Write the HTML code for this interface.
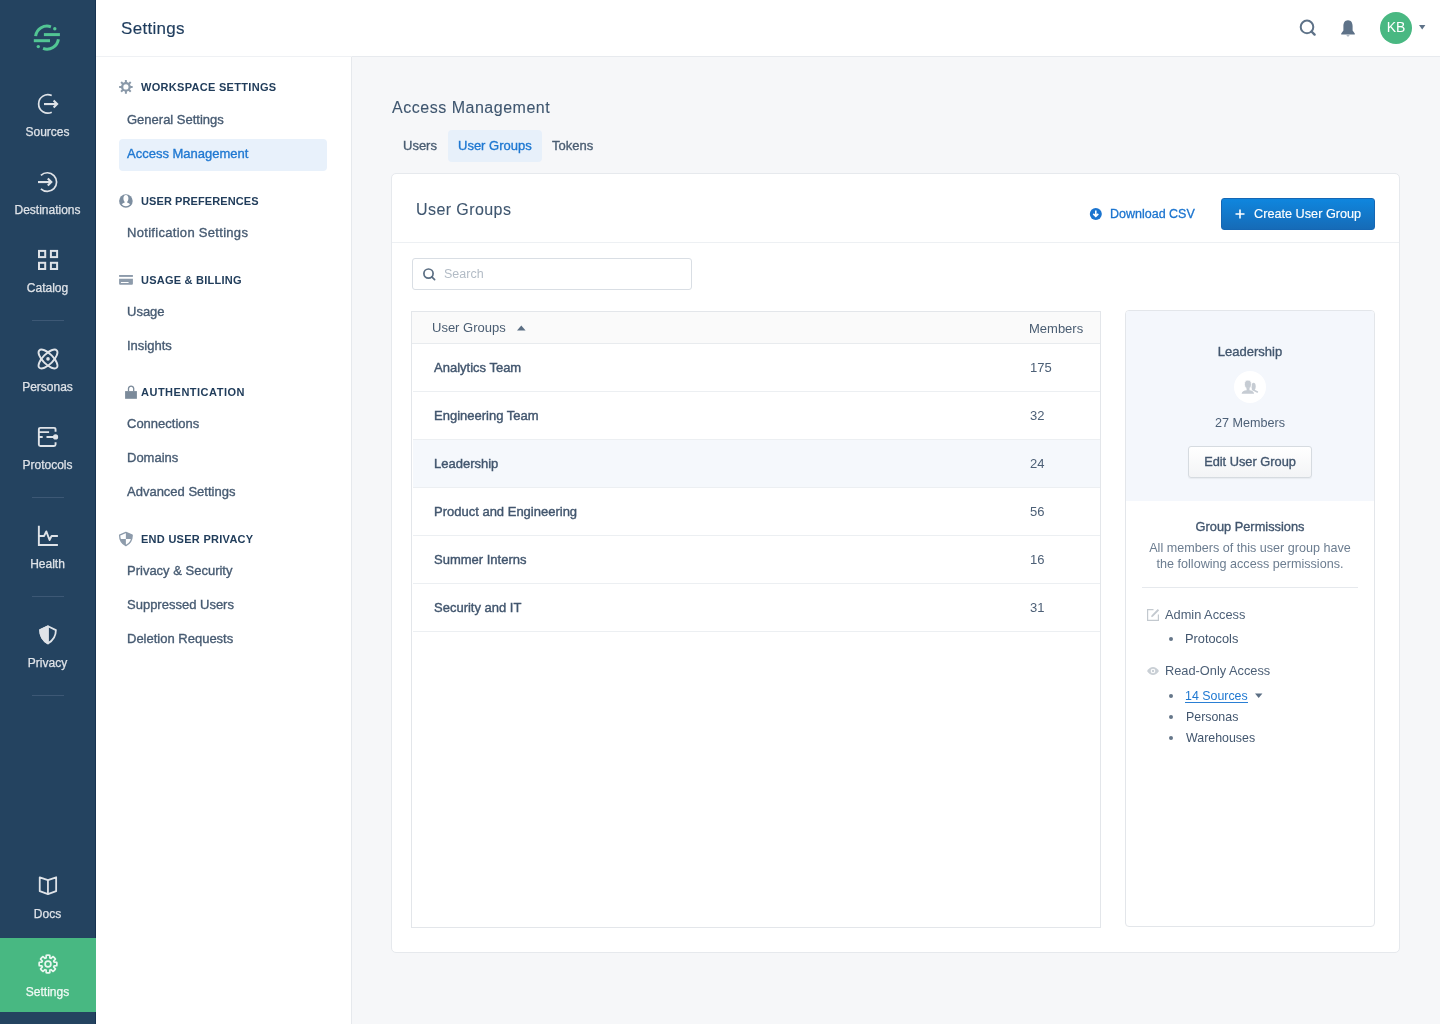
<!DOCTYPE html>
<html><head><meta charset="utf-8">
<style>
*{margin:0;padding:0;box-sizing:border-box}
html,body{width:1440px;height:1024px;overflow:hidden}
.t,.nl,.sh,.si{will-change:transform}
body{font-family:"Liberation Sans",sans-serif;background:#f6f7f9;position:relative;color:#42566e}
.abs{position:absolute}
.t{position:absolute;white-space:nowrap;line-height:1}
/* left nav */
#nav{left:0;top:0;width:96px;height:1024px;background:#244360;border-right:1px solid #173351}
.nl{position:absolute;left:0;width:95px;text-align:center;font-size:12px;color:#dfe3e8;line-height:1;-webkit-text-stroke:0.25px currentColor}
.ni{position:absolute;left:33px;width:30px;height:30px}
.ni svg{width:30px;height:30px;display:block}
.nd{position:absolute;left:32px;width:32px;height:1px;background:#3d5875}
/* header */
#hdr{left:96px;top:0;width:1344px;height:57px;background:#fff;border-bottom:1px solid #eff1f4}
/* subnav */
#sub{left:96px;top:57px;width:256px;height:967px;background:#fff;border-right:1px solid #e6e9ed}
.sh{position:absolute;left:45px;font-size:11px;font-weight:700;letter-spacing:0.3px;color:#213d5b;line-height:1}
.si{position:absolute;left:31px;font-size:13px;color:#475b72;line-height:1;-webkit-text-stroke:0.35px #475b72}
.sic{position:absolute;left:19px;width:24px;height:24px}
.sic svg{display:block;width:24px;height:24px}
</style></head><body>

<!-- LEFT NAV -->
<div id="nav" class="abs">
  <svg class="abs" style="left:27px;top:18px" width="40" height="40" viewBox="0 0 40 40">
    <g fill="none" stroke="#52c594" stroke-width="3">
      <path d="M8.61 18.08 A11.5 11.5 0 0 1 23.93 8.84"/>
      <path d="M31.39 21.22 A11.5 11.5 0 0 1 16.07 30.46"/>
    </g>
    <g fill="#52c594">
      <rect x="16.9" y="15.1" width="16" height="3"/>
      <rect x="6.8" y="21.2" width="16.2" height="3"/>
      <circle cx="27.8" cy="10.8" r="1.7"/>
      <circle cx="11.3" cy="28.6" r="1.7"/>
    </g>
  </svg>

  <div class="ni" style="top:90px"><svg viewBox="0 0 30 30" fill="none" stroke="#dfe3e8" stroke-width="1.7">
    <path d="M18.75 5.57 A9.2 9.2 0 1 0 18.75 22.23"/>
    <path d="M11 14.06 H23.8" stroke-width="2.1"/>
    <path d="M20.6 10.6 L24.1 14.06 L20.6 17.5" stroke-width="2.1"/>
  </svg></div>
  <div class="nl" style="top:126px">Sources</div>

  <div class="ni" style="top:168px"><svg viewBox="0 0 30 30" fill="none" stroke="#dfe3e8" stroke-width="1.7">
    <path d="M7.9 7.3 A9.3 9.3 0 1 1 7.9 20.8"/>
    <path d="M5 14.06 H18.2" stroke-width="2.1"/>
    <path d="M14.8 10.6 L18.3 14.06 L14.8 17.5" stroke-width="2.1"/>
  </svg></div>
  <div class="nl" style="top:204px">Destinations</div>

  <div class="ni" style="top:245px"><svg viewBox="0 0 30 30" fill="none" stroke="#dfe3e8" stroke-width="2">
    <rect x="6" y="5.9" width="6.2" height="6.2"/>
    <rect x="17.9" y="5.9" width="6.2" height="6.2"/>
    <rect x="6" y="17.8" width="6.2" height="6.2"/>
    <rect x="17.9" y="17.8" width="6.2" height="6.2"/>
  </svg></div>
  <div class="nl" style="top:282px">Catalog</div>

  <div class="nd" style="top:320px"></div>

  <div class="ni" style="top:344px"><svg viewBox="0 0 30 30" fill="none" stroke="#dfe3e8" stroke-width="1.9">
    <ellipse cx="15" cy="15" rx="12.3" ry="5.2" transform="rotate(45 15 15)"/>
    <ellipse cx="15" cy="15" rx="12.3" ry="5.2" transform="rotate(-45 15 15)"/>
    <circle cx="15" cy="14.9" r="1.8" fill="#dfe3e8" stroke="none"/>
  </svg></div>
  <div class="nl" style="top:381px">Personas</div>

  <div class="ni" style="top:422px"><svg viewBox="0 0 30 30" fill="none" stroke="#dfe3e8" stroke-width="1.9">
    <path d="M22.56 9.7 V7.4 Q22.56 5.86 21 5.86 H7.4 Q5.86 5.86 5.86 7.4 V22.5 Q5.86 24 7.4 24 H21 Q22.56 24 22.56 22.5 V20.2"/>
    <path d="M5.86 10.1 H16.1 M5.86 14.94 H9.7 M13.5 14.94 H21"/>
    <circle cx="22.56" cy="14.94" r="2.6" fill="#dfe3e8" stroke="none"/>
  </svg></div>
  <div class="nl" style="top:459px">Protocols</div>

  <div class="nd" style="top:497px"></div>

  <div class="ni" style="top:521px"><svg viewBox="0 0 30 30" fill="none" stroke="#dfe3e8" stroke-width="1.9">
    <path d="M5.86 4.8 V24 H24.9"/>
    <path d="M5.86 14.94 H11.13 L13.3 10.4 L16.55 19.04 L18.6 14.94 H24.9" stroke-linejoin="round"/>
  </svg></div>
  <div class="nl" style="top:558px">Health</div>

  <div class="nd" style="top:596px"></div>

  <div class="ni" style="top:620px"><svg viewBox="0 0 30 30" fill="none" stroke="#dfe3e8" stroke-width="1.8" stroke-linejoin="round">
    <path d="M15 6.3 L7.1 10.1 C7.1 16 9.8 20.6 15 23.4 C20.2 20.6 22.9 16 22.9 10.1 Z"/>
    <path d="M15 6.3 L7.1 10.1 C7.1 16 9.8 20.6 15 23.4 Z" fill="#dfe3e8"/>
  </svg></div>
  <div class="nl" style="top:657px">Privacy</div>

  <div class="nd" style="top:695px"></div>

  <div class="ni" style="top:871px"><svg viewBox="0 0 30 30" fill="none" stroke="#dfe3e8" stroke-width="1.8" stroke-linejoin="round">
    <path d="M6.74 6.3 L14.94 9.08 L23.15 6.3 V20.2 L14.94 23.15 L6.74 20.2 Z"/>
    <path d="M14.94 9.08 V23.15"/>
  </svg></div>
  <div class="nl" style="top:908px">Docs</div>

  <div class="abs" style="left:0;top:938px;width:96px;height:74px;background:#48b882"></div>
  <div class="ni" style="top:949px"><svg viewBox="0 0 30 30" fill="none" stroke="#eaf7f0" stroke-width="1.7" stroke-linejoin="round">
    <path d="M13.11 8.89 L13.23 6.28 A8.9 8.9 0 0 1 16.77 6.28 L16.89 8.89 A6.4 6.4 0 0 1 17.99 9.34 L19.92 7.58 A8.9 8.9 0 0 1 22.42 10.08 L20.66 12.01 A6.4 6.4 0 0 1 21.11 13.11 L23.72 13.23 A8.9 8.9 0 0 1 23.72 16.77 L21.11 16.89 A6.4 6.4 0 0 1 20.66 17.99 L22.42 19.92 A8.9 8.9 0 0 1 19.92 22.42 L17.99 20.66 A6.4 6.4 0 0 1 16.89 21.11 L16.77 23.72 A8.9 8.9 0 0 1 13.23 23.72 L13.11 21.11 A6.4 6.4 0 0 1 12.01 20.66 L10.08 22.42 A8.9 8.9 0 0 1 7.58 19.92 L9.34 17.99 A6.4 6.4 0 0 1 8.89 16.89 L6.28 16.77 A8.9 8.9 0 0 1 6.28 13.23 L8.89 13.11 A6.4 6.4 0 0 1 9.34 12.01 L7.58 10.08 A8.9 8.9 0 0 1 10.08 7.58 L12.01 9.34 A6.4 6.4 0 0 1 13.11 8.89 Z"/>
    <circle cx="15" cy="15" r="2.9"/>
  </svg></div>
  <div class="nl" style="top:986px;color:#f2faf6">Settings</div>
</div>

<!-- HEADER -->
<div id="hdr" class="abs">
  <div class="t" style="left:25px;top:20px;font-size:17px;letter-spacing:0.3px;color:#1d3b5c;-webkit-text-stroke:0.15px #1d3b5c">Settings</div>
  <!-- search -->
  <svg class="abs" style="left:1200px;top:18px" width="22" height="22" viewBox="0 0 22 22" fill="none" stroke="#5e7288" stroke-width="2">
    <circle cx="11" cy="8.9" r="6.3"/>
    <path d="M15.5 13.5 L18.6 16.6" stroke-linecap="round" stroke-width="2.4"/>
  </svg>
  <!-- bell -->
  <svg class="abs" style="left:1240px;top:18px" width="22" height="22" viewBox="0 0 22 22" fill="#5e7288">
    <path d="M12 2.2 C8.6 2.2 7.4 5 7.4 8 V12.6 L5.2 15.4 V16.4 H18.8 V15.4 L16.6 12.6 V8 C16.6 5 15.4 2.2 12 2.2 Z"/>
    <path d="M10.2 17.4 H13.8 L12 18.6 Z"/>
  </svg>
  <!-- avatar -->
  <div class="abs" style="left:1284px;top:12px;width:32px;height:32px;border-radius:50%;background:#49b882"></div>
  <div class="t" style="left:1284px;top:20px;width:32px;text-align:center;font-size:14px;color:#fff">KB</div>
  <svg class="abs" style="left:1323px;top:25px" width="7" height="5" viewBox="0 0 7 5"><path d="M0 0 H6.4 L3.2 4.4 Z" fill="#5e7288"/></svg>
</div>

<div class="abs" style="left:352px;top:56px;width:1088px;height:1px;background:#e7eaee"></div>
<!-- SUBNAV -->
<div id="sub" class="abs">
  <div class="sic" style="top:19px"><svg viewBox="0 0 24 24" fill="#8a99a9">
    <circle cx="10.9" cy="10.9" r="4.9"/>
    <g id="tooth"><rect x="9.9" y="4.1" width="2" height="3.2" rx="0.3"/></g>
    <use href="#tooth" transform="rotate(45 10.9 10.9)"/><use href="#tooth" transform="rotate(90 10.9 10.9)"/><use href="#tooth" transform="rotate(135 10.9 10.9)"/><use href="#tooth" transform="rotate(180 10.9 10.9)"/><use href="#tooth" transform="rotate(225 10.9 10.9)"/><use href="#tooth" transform="rotate(270 10.9 10.9)"/><use href="#tooth" transform="rotate(315 10.9 10.9)"/>
    <circle cx="10.9" cy="10.9" r="2.6" fill="#fff"/>
  </svg></div>
  <div class="sh" style="top:25px">WORKSPACE SETTINGS</div>
  <div class="si" style="top:56px">General Settings</div>
  <div class="abs" style="left:23px;top:82px;width:208px;height:32px;background:#e8f1fb;border-radius:4px"></div>
  <div class="si" style="top:90px;color:#1f78d1;-webkit-text-stroke:0.35px #1f78d1">Access Management</div>

  <div class="sic" style="top:132px"><svg viewBox="0 0 24 24">
    <circle cx="10.9" cy="11.95" r="6.8" fill="#7d8ea0"/>
    <path d="M10.9 6.1 C9.3 6.1 8.4 7.5 8.4 9.3 C8.4 10.9 9 12.2 9.7 12.9 V13.6 C8.5 14 7.4 14.5 6.7 15.3 C7.8 16.6 9.2 17.2 10.9 17.2 C12.6 17.2 14 16.6 15.1 15.3 C14.4 14.5 13.3 14 12.1 13.6 V12.9 C12.8 12.2 13.4 10.9 13.4 9.3 C13.4 7.5 12.5 6.1 10.9 6.1 Z" fill="#fff"/>
  </svg></div>
  <div class="sh" style="top:139px;letter-spacing:0.1px">USER PREFERENCES</div>
  <div class="si" style="top:169px;letter-spacing:0.3px">Notification Settings</div>

  <div class="sic" style="top:211px"><svg viewBox="0 0 24 24" fill="#8d9bab">
    <rect x="4.1" y="7" width="13.8" height="1.9"/>
    <path d="M4.1 10.8 H17.9 V15.8 Q17.9 16.8 16.9 16.8 H5.1 Q4.1 16.8 4.1 15.8 Z M5.9 14.06 V15 H13.6 V14.06 Z" fill-rule="evenodd"/>
  </svg></div>
  <div class="sh" style="top:218px;letter-spacing:0.24px">USAGE &amp; BILLING</div>
  <div class="si" style="top:248px">Usage</div>
  <div class="si" style="top:282px">Insights</div>

  <div class="sic" style="top:323px"><svg viewBox="0 0 24 24">
    <path d="M13.5 11.3 V8.3 A2.65 2.65 0 0 1 18.7 8.3 V11.3" fill="none" stroke="#7b8a9a" stroke-width="1.3"/>
    <rect x="10.1" y="11.1" width="11.8" height="7.7" fill="#7b8a9a"/>
  </svg></div>
  <div class="sh" style="top:330px;letter-spacing:0.5px">AUTHENTICATION</div>
  <div class="si" style="top:360px">Connections</div>
  <div class="si" style="top:394px">Domains</div>
  <div class="si" style="top:428px">Advanced Settings</div>

  <div class="sic" style="top:470px"><svg viewBox="0 0 24 24">
    <path d="M10.9 5.3 L4.6 8.2 C4.6 13 6.9 16.6 10.9 18.6 C14.9 16.6 17.2 13 17.2 8.2 Z" fill="none" stroke="#8d9bab" stroke-width="1.3" stroke-linejoin="round"/>
    <path d="M10.9 5.3 L17.2 8.2 C17.2 9.6 17 10.8 16.6 12 H10.9 Z" fill="#8d9bab"/>
    <path d="M10.9 12 H5.2 C6.1 14.9 8 17.1 10.9 18.6 Z" fill="#8d9bab"/>
  </svg></div>
  <div class="sh" style="top:477px;letter-spacing:0.28px">END USER PRIVACY</div>
  <div class="si" style="top:507px">Privacy &amp; Security</div>
  <div class="si" style="top:541px">Suppressed Users</div>
  <div class="si" style="top:575px">Deletion Requests</div>
</div>

<!-- MAIN -->
<div class="t" style="left:392px;top:100px;font-size:16px;letter-spacing:0.52px;color:#3f566f;-webkit-text-stroke:0.1px #3f566f">Access Management</div>
<div class="abs" style="left:448px;top:130px;width:94px;height:32px;background:#e7f0fa;border-radius:4px"></div>
<div class="t" style="left:403px;top:139px;font-size:13px;color:#4a5d72;-webkit-text-stroke:0.35px #4a5d72">Users</div>
<div class="t" style="left:458px;top:139px;font-size:13px;color:#1f78d1;-webkit-text-stroke:0.35px #1f78d1">User Groups</div>
<div class="t" style="left:552px;top:139px;font-size:13px;color:#4a5d72;-webkit-text-stroke:0.35px #4a5d72">Tokens</div>

<!-- card -->
<div class="abs" style="left:391px;top:173px;width:1009px;height:780px;background:#fff;border:1px solid #e6e9ed;border-radius:5px"></div>
<div class="abs" style="left:392px;top:242px;width:1007px;height:1px;background:#edf0f3"></div>
<div class="t" style="left:416px;top:201.5px;font-size:16px;letter-spacing:0.42px;color:#3f566f;-webkit-text-stroke:0.1px #3f566f">User Groups</div>

<svg class="abs" style="left:1089px;top:207px" width="14" height="14" viewBox="0 0 14 14">
  <circle cx="6.8" cy="7" r="6" fill="#1b74cf"/>
  <path d="M6.8 3.6 V9.2 M4.3 6.9 L6.8 9.4 L9.3 6.9" fill="none" stroke="#fff" stroke-width="1.6"/>
</svg>
<div class="t" style="left:1110px;top:208px;font-size:12.5px;color:#1b74cf;-webkit-text-stroke:0.3px #1b74cf">Download CSV</div>

<div class="abs" style="left:1221px;top:198px;width:154px;height:32px;border-radius:3px;background:linear-gradient(#0f86de,#166bb7);border:1px solid #1567b4"></div>
<svg class="abs" style="left:1235px;top:209px" width="10" height="10" viewBox="0 0 10 10"><path d="M5 0.5 V9.5 M0.5 5 H9.5" stroke="#fff" stroke-width="1.6"/></svg>
<div class="t" style="left:1254px;top:208px;font-size:12.7px;color:#fff;-webkit-text-stroke:0.15px #fff">Create User Group</div>

<!-- search -->
<div class="abs" style="left:412px;top:258px;width:280px;height:32px;border:1px solid #d9dee4;border-radius:3px;background:#fff"></div>
<svg class="abs" style="left:421px;top:266px" width="16" height="16" viewBox="0 0 16 16" fill="none" stroke="#5a6d82" stroke-width="1.7">
  <circle cx="7.5" cy="7.6" r="4.6"/><path d="M10.8 10.9 L13.6 13.6" stroke-linecap="round"/>
</svg>
<div class="t" style="left:444px;top:268px;font-size:12.5px;color:#b3bcc6">Search</div>

<!-- table -->
<div class="abs" style="left:411px;top:311px;width:690px;height:617px;border:1px solid #e3e6ea;background:#fff"></div>
<div class="abs" style="left:412px;top:312px;width:688px;height:32px;background:#fafafa;border-bottom:1px solid #e8ebee"></div>
<div class="t" style="left:432px;top:321px;font-size:13px;color:#4a5d72">User Groups</div>
<svg class="abs" style="left:517px;top:325px" width="9" height="6" viewBox="0 0 9 6"><path d="M0 5.6 H8.6 L4.3 0.4 Z" fill="#5b6e83"/></svg>
<div class="t" style="left:1029px;top:321.5px;font-size:13px;color:#4a5d72">Members</div>

<div class="abs" style="left:413px;top:439px;width:687px;height:48px;background:#f5f8fc"></div>
<div class="abs" style="left:413px;top:391px;width:687px;height:1px;background:#eceff2"></div>
<div class="abs" style="left:413px;top:439px;width:687px;height:1px;background:#eceff2"></div>
<div class="abs" style="left:413px;top:487px;width:687px;height:1px;background:#eceff2"></div>
<div class="abs" style="left:413px;top:535px;width:687px;height:1px;background:#eceff2"></div>
<div class="abs" style="left:413px;top:583px;width:687px;height:1px;background:#eceff2"></div>
<div class="abs" style="left:413px;top:631px;width:687px;height:1px;background:#eceff2"></div>

<div class="t rw" style="left:434px;top:361px">Analytics Team</div><div class="t rn" style="left:1030px;top:361px">175</div>
<div class="t rw" style="left:434px;top:409px">Engineering Team</div><div class="t rn" style="left:1030px;top:409px">32</div>
<div class="t rw" style="left:434px;top:457px">Leadership</div><div class="t rn" style="left:1030px;top:457px">24</div>
<div class="t rw" style="left:434px;top:505px">Product and Engineering</div><div class="t rn" style="left:1030px;top:505px">56</div>
<div class="t rw" style="left:434px;top:553px">Summer Interns</div><div class="t rn" style="left:1030px;top:553px">16</div>
<div class="t rw" style="left:434px;top:601px">Security and IT</div><div class="t rn" style="left:1030px;top:601px">31</div>

<!-- right panel -->
<div class="abs" style="left:1125px;top:310px;width:250px;height:617px;border:1px solid #e3e6ea;border-radius:4px;background:#fff;overflow:hidden">
  <div class="abs" style="left:0;top:0;width:248px;height:190px;background:#f4f7fc"></div>
</div>
<div class="t" style="left:1125px;top:344.5px;width:250px;text-align:center;font-size:13px;color:#42566e;-webkit-text-stroke:0.35px #42566e">Leadership</div>
<div class="abs" style="left:1234px;top:371px;width:32px;height:32px;border-radius:50%;background:#fff"></div>
<svg class="abs" style="left:1240px;top:378px" width="20" height="18" viewBox="0 0 20 18">
  <ellipse cx="13.6" cy="8.4" rx="2.1" ry="3.6" fill="#c6ccd3"/>
  <path d="M12.6 11.6 L17.4 14" stroke="#c6ccd3" stroke-width="1.6" stroke-linecap="round"/>
  <ellipse cx="7.95" cy="6.3" rx="3.5" ry="4.2" fill="#c6ccd3" stroke="#fff" stroke-width="0.8"/>
  <path d="M6.4 9.8 H9.5 V12.2 C11.9 12.4 13.8 13.4 14.1 15.8 H1.6 C1.9 13.4 3.9 12.4 6.7 12.2 Z" fill="#c6ccd3"/>
</svg>
<div class="t" style="left:1125px;top:417px;width:250px;text-align:center;font-size:12.6px;color:#4d6077">27 Members</div>
<div class="abs" style="left:1188px;top:446px;width:124px;height:32px;border:1px solid #d6dbe0;border-radius:3px;background:linear-gradient(#fff,#f3f4f6);box-shadow:0 1px 1px rgba(0,0,0,0.05)"></div>
<div class="t" style="left:1188px;top:456px;width:124px;text-align:center;font-size:12.8px;color:#42566e;-webkit-text-stroke:0.35px #42566e">Edit User Group</div>

<div class="t" style="left:1125px;top:521px;width:250px;text-align:center;font-size:12.8px;color:#42566e;-webkit-text-stroke:0.35px #42566e">Group Permissions</div>
<div class="t" style="left:1125px;top:540px;width:250px;text-align:center;font-size:12.6px;color:#6c7d90;line-height:16px;white-space:normal">All members of this user group have<br>the following access permissions.</div>
<div class="abs" style="left:1142px;top:587px;width:216px;height:1px;background:#e6e9ed"></div>

<svg class="abs" style="left:1146px;top:608px" width="14" height="14" viewBox="0 0 14 14" fill="none" stroke="#c3c9cf" stroke-width="1.2">
  <path d="M7.5 1.6 H1.6 V12.4 H12.4 V6.4"/>
  <path d="M12.2 1.4 L6.2 7.6 L5.6 8.6 L6.6 8 L12.6 2" stroke-width="1.3"/>
</svg>
<div class="t" style="left:1165px;top:609px;font-size:12.8px;color:#4d6077">Admin Access</div>
<div class="abs" style="left:1168.5px;top:636.5px;width:4.6px;height:4.6px;border-radius:50%;background:#66778a"></div>
<div class="t" style="left:1185px;top:633px;font-size:12.8px;color:#42566e">Protocols</div>

<svg class="abs" style="left:1146px;top:665px" width="14" height="12" viewBox="0 0 14 12">
  <path d="M1 6 C2.8 3.2 4.8 2 7 2 C9.2 2 11.2 3.2 13 6 C11.2 8.8 9.2 10 7 10 C4.8 10 2.8 8.8 1 6 Z" fill="#c9cfd5"/>
  <circle cx="7" cy="6" r="2.3" fill="#fff"/><circle cx="7" cy="6" r="1.2" fill="#c9cfd5"/>
</svg>
<div class="t" style="left:1165px;top:665px;font-size:12.8px;color:#4d6077">Read-Only Access</div>
<div class="abs" style="left:1168.5px;top:693.5px;width:4.6px;height:4.6px;border-radius:50%;background:#66778a"></div>
<div class="t" style="left:1185px;top:690px;font-size:12.4px;color:#1f78d1;border-bottom:1px solid #2a7fd4;padding-bottom:0;line-height:12px">14 Sources</div>
<svg class="abs" style="left:1255px;top:693px" width="8" height="6" viewBox="0 0 8 6"><path d="M0 0.4 H7.4 L3.7 5 Z" fill="#5b6e83"/></svg>
<div class="abs" style="left:1168.5px;top:714.5px;width:4.6px;height:4.6px;border-radius:50%;background:#66778a"></div>
<div class="t" style="left:1186px;top:711px;font-size:12.4px;color:#42566e">Personas</div>
<div class="abs" style="left:1168.5px;top:735.5px;width:4.6px;height:4.6px;border-radius:50%;background:#66778a"></div>
<div class="t" style="left:1186px;top:732px;font-size:12.4px;color:#42566e">Warehouses</div>

<style>
.rw{font-size:13px;color:#42566e;-webkit-text-stroke:0.4px #42566e}
.rn{font-size:13px;color:#4d6077}
</style>
</body></html>
